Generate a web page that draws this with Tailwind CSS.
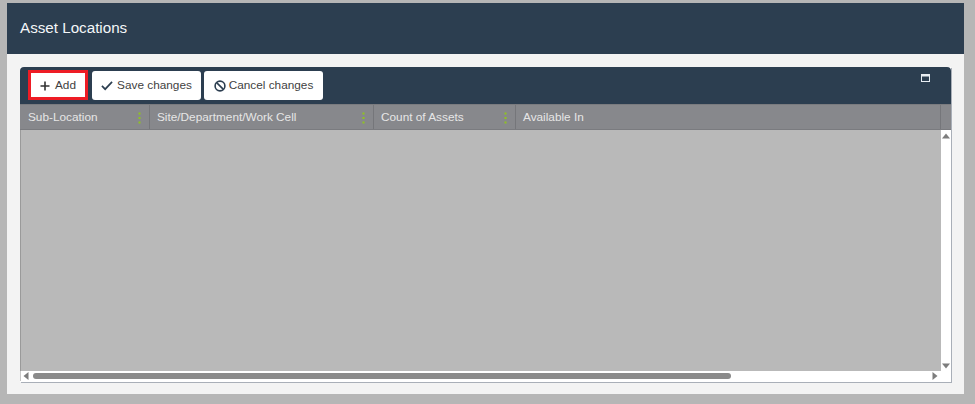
<!DOCTYPE html>
<html>
<head>
<meta charset="utf-8">
<script src="https://cdn.jsdelivr.net/npm/@tailwindcss/browser@4"></script>
</head>
<body class="w-[975px] h-[404px] overflow-hidden bg-[#b6b6b6] font-['Liberation_Sans',Arial,sans-serif]">
<div class="pt-[3px] pl-[7px]">
  <div class="w-[957px] h-[391px] bg-[#f3f3f3] flex flex-col">
    <div class="h-[51px] bg-[#2c3e50] flex items-center pl-[13px] text-[#f4f6f8] text-[15.2px]">Asset Locations</div>
    <div class="pt-[13px] pl-[13px]">
      <div class="w-[931px] h-[315px] flex flex-col bg-white shadow-[1px_1px_0_#a9afb8]">
        <div class="h-[37px] bg-[#2c3e50] rounded-t-[4px] flex items-start pl-[8px] pt-[3px] gap-[3px] text-[11.8px] text-[#3f3f3f] relative">
          <button class="h-[30px] w-[60px] bg-white border-[3px] border-[#ee1c25] flex items-center justify-center gap-[5px] pt-[1px]">
            <svg width="10" height="10" viewBox="0 0 10 10"><path d="M5 0.5V9.5M0.5 5H9.5" stroke="#333" stroke-width="1.6" fill="none"/></svg>
            <span>Add</span>
          </button>
          <button class="ml-[1px] h-[29px] w-[109px] bg-white rounded-[3px] flex items-center justify-center gap-[4px] mt-[1px]">
            <svg width="12" height="11" viewBox="0 0 13 11"><path d="M1 6L4.5 9.5L12 1.5" stroke="#2c3e50" stroke-width="1.8" fill="none"/></svg>
            <span>Save changes</span>
          </button>
          <button class="h-[29px] w-[119px] bg-white rounded-[3px] flex items-center justify-center gap-[3px] mt-[1px]">
            <svg width="12" height="12" viewBox="0 0 12 12"><circle cx="6" cy="6" r="4.9" stroke="#2c3e50" stroke-width="1.6" fill="none"/><path d="M2.6 2.6L9.4 9.4" stroke="#2c3e50" stroke-width="1.6"/></svg>
            <span>Cancel changes</span>
          </button>
          <svg class="absolute right-[21px] top-[7px]" width="9" height="8" viewBox="0 0 9 8"><rect x="0.5" y="0.5" width="8" height="7" fill="#2c3e50" stroke="#e8edf2"/><rect x="0.5" y="0.5" width="8" height="2" fill="#e8edf2"/></svg>
        </div>
        <div class="h-[26px] bg-[#87888c] flex text-[11.8px] text-[#e6e6e6] border-y border-[#7a7b7f] items-center">
          <div class="w-[130px] h-full border-r border-[#75767a] pl-[8px] flex items-center justify-between pr-[8px] pt-[1px]">
            <span>Sub-Location</span>
            <svg class="shrink-0" width="3" height="12" viewBox="0 0 3 12" fill="#8fc31f"><rect x="0.5" y="0.5" width="2" height="2"/><rect x="0.5" y="5" width="2" height="2"/><rect x="0.5" y="9.5" width="2" height="2"/></svg>
          </div>
          <div class="w-[224px] h-full border-r border-[#75767a] pl-[7px] flex items-center justify-between pr-[8px] pt-[1px]">
            <span>Site/Department/Work Cell</span>
            <svg class="shrink-0" width="3" height="12" viewBox="0 0 3 12" fill="#8fc31f"><rect x="0.5" y="0.5" width="2" height="2"/><rect x="0.5" y="5" width="2" height="2"/><rect x="0.5" y="9.5" width="2" height="2"/></svg>
          </div>
          <div class="w-[142px] h-full border-r border-[#75767a] pl-[7px] flex items-center justify-between pr-[8px] pt-[1px]">
            <span>Count of Assets</span>
            <svg class="shrink-0" width="3" height="12" viewBox="0 0 3 12" fill="#8fc31f"><rect x="0.5" y="0.5" width="2" height="2"/><rect x="0.5" y="5" width="2" height="2"/><rect x="0.5" y="9.5" width="2" height="2"/></svg>
          </div>
          <div class="w-[425px] h-full border-r border-[#75767a] pl-[7px] flex items-center pt-[1px]"><span>Available In</span></div>
          <div class="flex-1"></div>
        </div>
        <div class="h-[241px] flex">
          <div class="w-[921px] bg-[#b9b9b9] border-l border-[#9a9a9a]"></div>
          <div class="flex-1 bg-white flex flex-col items-center justify-between pt-[3px] pb-[2px]">
            <svg width="8" height="6" viewBox="0 0 8 6"><path d="M4 0.5L8 5.5H0Z" fill="#7d7d7d"/></svg>
            <svg width="8" height="6" viewBox="0 0 8 6"><path d="M4 5.5L8 0.5H0Z" fill="#7d7d7d"/></svg>
          </div>
        </div>
        <div class="h-[10px] bg-white flex items-center pl-[2px] pr-[13px] border-l border-[#c8c8c8]">
          <svg width="6" height="8" viewBox="0 0 6 8"><path d="M0.5 4L5.5 0V8Z" fill="#7d7d7d"/></svg>
          <div class="ml-[4px] w-[698px] h-[6px] bg-[#8a8a8a] rounded-full"></div>
          <div class="flex-1"></div>
          <svg width="6" height="8" viewBox="0 0 6 8"><path d="M5.5 4L0.5 0V8Z" fill="#7d7d7d"/></svg>
        </div>
        <div class="flex-1 bg-white"></div>
      </div>
    </div>
  </div>
</div>
</body>
</html>
